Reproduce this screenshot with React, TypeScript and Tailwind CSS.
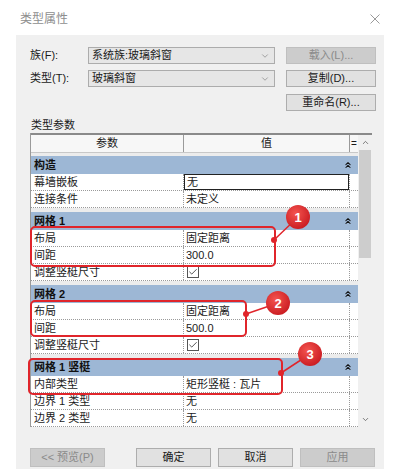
import React from "react";
import { ChevronDown, ChevronUp, ChevronsUp, Check } from "lucide-react";

type Row = { k: string; v?: string; check?: boolean; selected?: boolean };
type Group = { title: string; rows: Row[] };

const groups: Group[] = [
  {
    title: "构造",
    rows: [
      { k: "幕墙嵌板", v: "无", selected: true },
      { k: "连接条件", v: "未定义" },
    ],
  },
  {
    title: "网格 1",
    rows: [
      { k: "布局", v: "固定距离" },
      { k: "间距", v: "300.0" },
      { k: "调整竖梃尺寸", check: true },
    ],
  },
  {
    title: "网格 2",
    rows: [
      { k: "布局", v: "固定距离" },
      { k: "间距", v: "500.0" },
      { k: "调整竖梃尺寸", check: true },
    ],
  },
  {
    title: "网格 1 竖梃",
    rows: [
      { k: "内部类型", v: "矩形竖梃 : 瓦片" },
      { k: "边界 1 类型", v: "无" },
      { k: "边界 2 类型", v: "无" },
    ],
  },
];

const font = "font-['Liberation_Sans','Noto_Sans_CJK_SC',sans-serif]";

function SelectBox({ text }: { text: string }) {
  return (
    <div className="w-[187px] h-[17px] bg-[#e6e6e6] border border-[#acacac] flex items-center pl-[3px] pr-[4px]">
      <span className="flex-1 text-[11px] leading-none text-[#1a1a1a]">{text}</span>
      <ChevronDown className="w-[10px] h-[10px] text-[#777]" strokeWidth={1.5} />
    </div>
  );
}

function Btn({ text, disabled }: { text: string; disabled?: boolean }) {
  return (
    <div
      className={
        disabled
          ? "w-[90px] h-[17px] bg-[#cccccc] border border-[#bfbfbf] flex items-center justify-center text-[11px] leading-none text-[#8a8a8a]"
          : "w-[90px] h-[17px] bg-[#e1e1e1] border border-[#adadad] flex items-center justify-center text-[11px] leading-none text-[#1a1a1a]"
      }
    >
      {text}
    </div>
  );
}

function FootBtn({ text, disabled }: { text: string; disabled?: boolean }) {
  return (
    <div
      className={
        disabled
          ? "w-[75px] h-[19px] bg-[#cccccc] border border-[#bfbfbf] flex items-center justify-center text-[11px] leading-none text-[#8a8a8a]"
          : "w-[75px] h-[19px] bg-[#e1e1e1] border border-[#adadad] flex items-center justify-center text-[11px] leading-none text-[#1a1a1a]"
      }
    >
      {text}
    </div>
  );
}

function DataRow({ row }: { row: Row }) {
  return (
    <div className="grid grid-cols-[152px_166px_10px] h-[17px] bg-white border-b border-dotted border-[#9a9a9a] text-[11px] leading-none text-[#1a1a1a]">
      <div className="flex items-center pl-[3px]">{row.k}</div>
      <div className="border-l border-dotted border-[#9a9a9a] flex items-center">
        {row.selected ? (
          <div className="w-[165px] h-[16px] border border-[#222] flex items-center pl-[2px]">{row.v}</div>
        ) : row.check ? (
          <div className="ml-[3px] w-[12px] h-[12px] border border-[#555] bg-white flex items-center justify-center">
            <Check className="w-[10px] h-[10px] text-[#333]" strokeWidth={2} />
          </div>
        ) : (
          <span className="pl-[2px]">{row.v}</span>
        )}
      </div>
      <div className="border-l border-dotted border-[#9a9a9a]" />
    </div>
  );
}

function GroupBlock({ g, first }: { g: Group; first: boolean }) {
  return (
    <div className={first ? "pt-[3px]" : "pt-[4px]"}>
      <div className="h-[18px] bg-[#9db7d5] flex items-center justify-between pl-[3px] pr-[5px]">
        <span className="text-[11px] leading-none font-bold text-[#111]">{g.title}</span>
        <ChevronsUp className="w-[10px] h-[10px] text-[#111]" strokeWidth={2.5} />
      </div>
      {g.rows.map((r, i) => (
        <DataRow key={i} row={r} />
      ))}
    </div>
  );
}

function Annotations() {
  const red = "#e0252b";
  const marks = [
    { box: [31, 227, 244, 39], dot: [274, 240], c: [298, 217], n: "1" },
    { box: [31, 301, 215, 35], dot: [246, 314], c: [278, 303], n: "2" },
    { box: [29, 359, 253, 35], dot: [281, 373], c: [310, 354], n: "3" },
  ];
  return (
    <svg className="absolute left-0 top-0 pointer-events-none" width="398" height="474">
      <defs>
        <radialGradient id="rg" cx="40%" cy="35%" r="70%">
          <stop offset="0%" stopColor="#f4544f" />
          <stop offset="100%" stopColor="#c91a20" />
        </radialGradient>
      </defs>
      {marks.map((m) => (
        <g key={m.n}>
          <rect x={m.box[0]} y={m.box[1]} width={m.box[2]} height={m.box[3]} rx="4" fill="none" stroke={red} strokeWidth="2" />
          <line x1={m.dot[0]} y1={m.dot[1]} x2={m.c[0]} y2={m.c[1]} stroke={red} strokeWidth="1.5" />
          <circle cx={m.dot[0]} cy={m.dot[1]} r="3" fill={red} />
          <circle cx={m.c[0]} cy={m.c[1]} r="12" fill="url(#rg)" />
          <text
            x={m.c[0]}
            y={m.c[1] + 4.5}
            textAnchor="middle"
            fontSize="13"
            fontWeight="bold"
            fill="#fff"
            fontFamily="Liberation Sans, sans-serif"
          >
            {m.n}
          </text>
        </g>
      ))}
    </svg>
  );
}

export default function App() {
  return (
    <div className={`relative w-[398px] h-[474px] bg-white overflow-hidden ${font}`}>
      {/* Title bar */}
      <div className="h-[35px] flex items-start justify-between pl-[20px] pr-[18px] pt-[13px]">
        <span className="text-[12px] leading-none text-[#8e8e8e]">类型属性</span>
        <svg width="10" height="10" viewBox="0 0 10 10" className="mt-[1px]">
          <path d="M0.5 0.5 L9.5 9.5 M9.5 0.5 L0.5 9.5" stroke="#9a9a9a" strokeWidth="1" />
        </svg>
      </div>

      {/* Panel */}
      <div className="ml-[16px] w-[368px] h-[434px] bg-[#f0f0f0] pl-[14px] pr-[8px] pt-[12px]">
        <div className="flex items-center h-[17px]">
          <span className="w-[58px] text-[11px] leading-none text-[#1a1a1a]">族(F):</span>
          <SelectBox text="系统族:玻璃斜窗" />
          <div className="ml-[11px]">
            <Btn text="载入(L)..." disabled />
          </div>
        </div>
        <div className="flex items-center h-[17px] mt-[6px]">
          <span className="w-[58px] text-[11px] leading-none text-[#1a1a1a]">类型(T):</span>
          <SelectBox text="玻璃斜窗" />
          <div className="ml-[11px]">
            <Btn text="复制(D)..." />
          </div>
        </div>
        <div className="flex justify-end h-[17px] mt-[7px]">
          <Btn text="重命名(R)..." />
        </div>

        <div className="h-[22px] flex items-center pl-[1px]">
          <span className="text-[11px] leading-none text-[#1a1a1a] mt-[6px]">类型参数</span>
        </div>

        {/* Table */}
        <div className="flex w-[342px] h-[294px] bg-[#ececec]">
          <div className="w-[328px] flex flex-col border-l border-[#9a9a9a]">
            <div className="grid grid-cols-[152px_166px_10px] h-[20px] bg-[#f7f7f7] border-t-2 border-t-[#8a8a8a] border-b border-b-[#c8c8c8] text-[11px] leading-none text-[#1a1a1a]">
              <div className="flex items-center justify-center">参数</div>
              <div className="flex items-center justify-center border-l border-[#9a9a9a]">值</div>
              <div className="flex items-center justify-center border-l border-r border-[#9a9a9a] text-[10px]">=</div>
            </div>
            {groups.map((g, i) => (
              <GroupBlock key={g.title} g={g} first={i === 0} />
            ))}
          </div>
          <div className="w-[14px] flex flex-col items-center bg-[#f0f0f0] border-t-2 border-t-[#8a8a8a]">
            <div className="h-[15px] flex items-center justify-center">
              <ChevronUp className="w-[9px] h-[9px] text-[#555]" strokeWidth={2} />
            </div>
            <div className="w-[12px] h-[108px] bg-[#cdcdcd]" />
            <div className="flex-1" />
            <div className="h-[16px] flex items-center justify-center">
              <ChevronDown className="w-[9px] h-[9px] text-[#555]" strokeWidth={2} />
            </div>
          </div>
        </div>

        {/* Footer buttons */}
        <div className="flex items-center mt-[21px] w-[346px]">
          <FootBtn text="<< 预览(P)" disabled />
          <div className="ml-[31px] flex gap-[7px]">
            <FootBtn text="确定" />
            <FootBtn text="取消" />
            <FootBtn text="应用" disabled />
          </div>
        </div>
      </div>

      <Annotations />
    </div>
  );
}
